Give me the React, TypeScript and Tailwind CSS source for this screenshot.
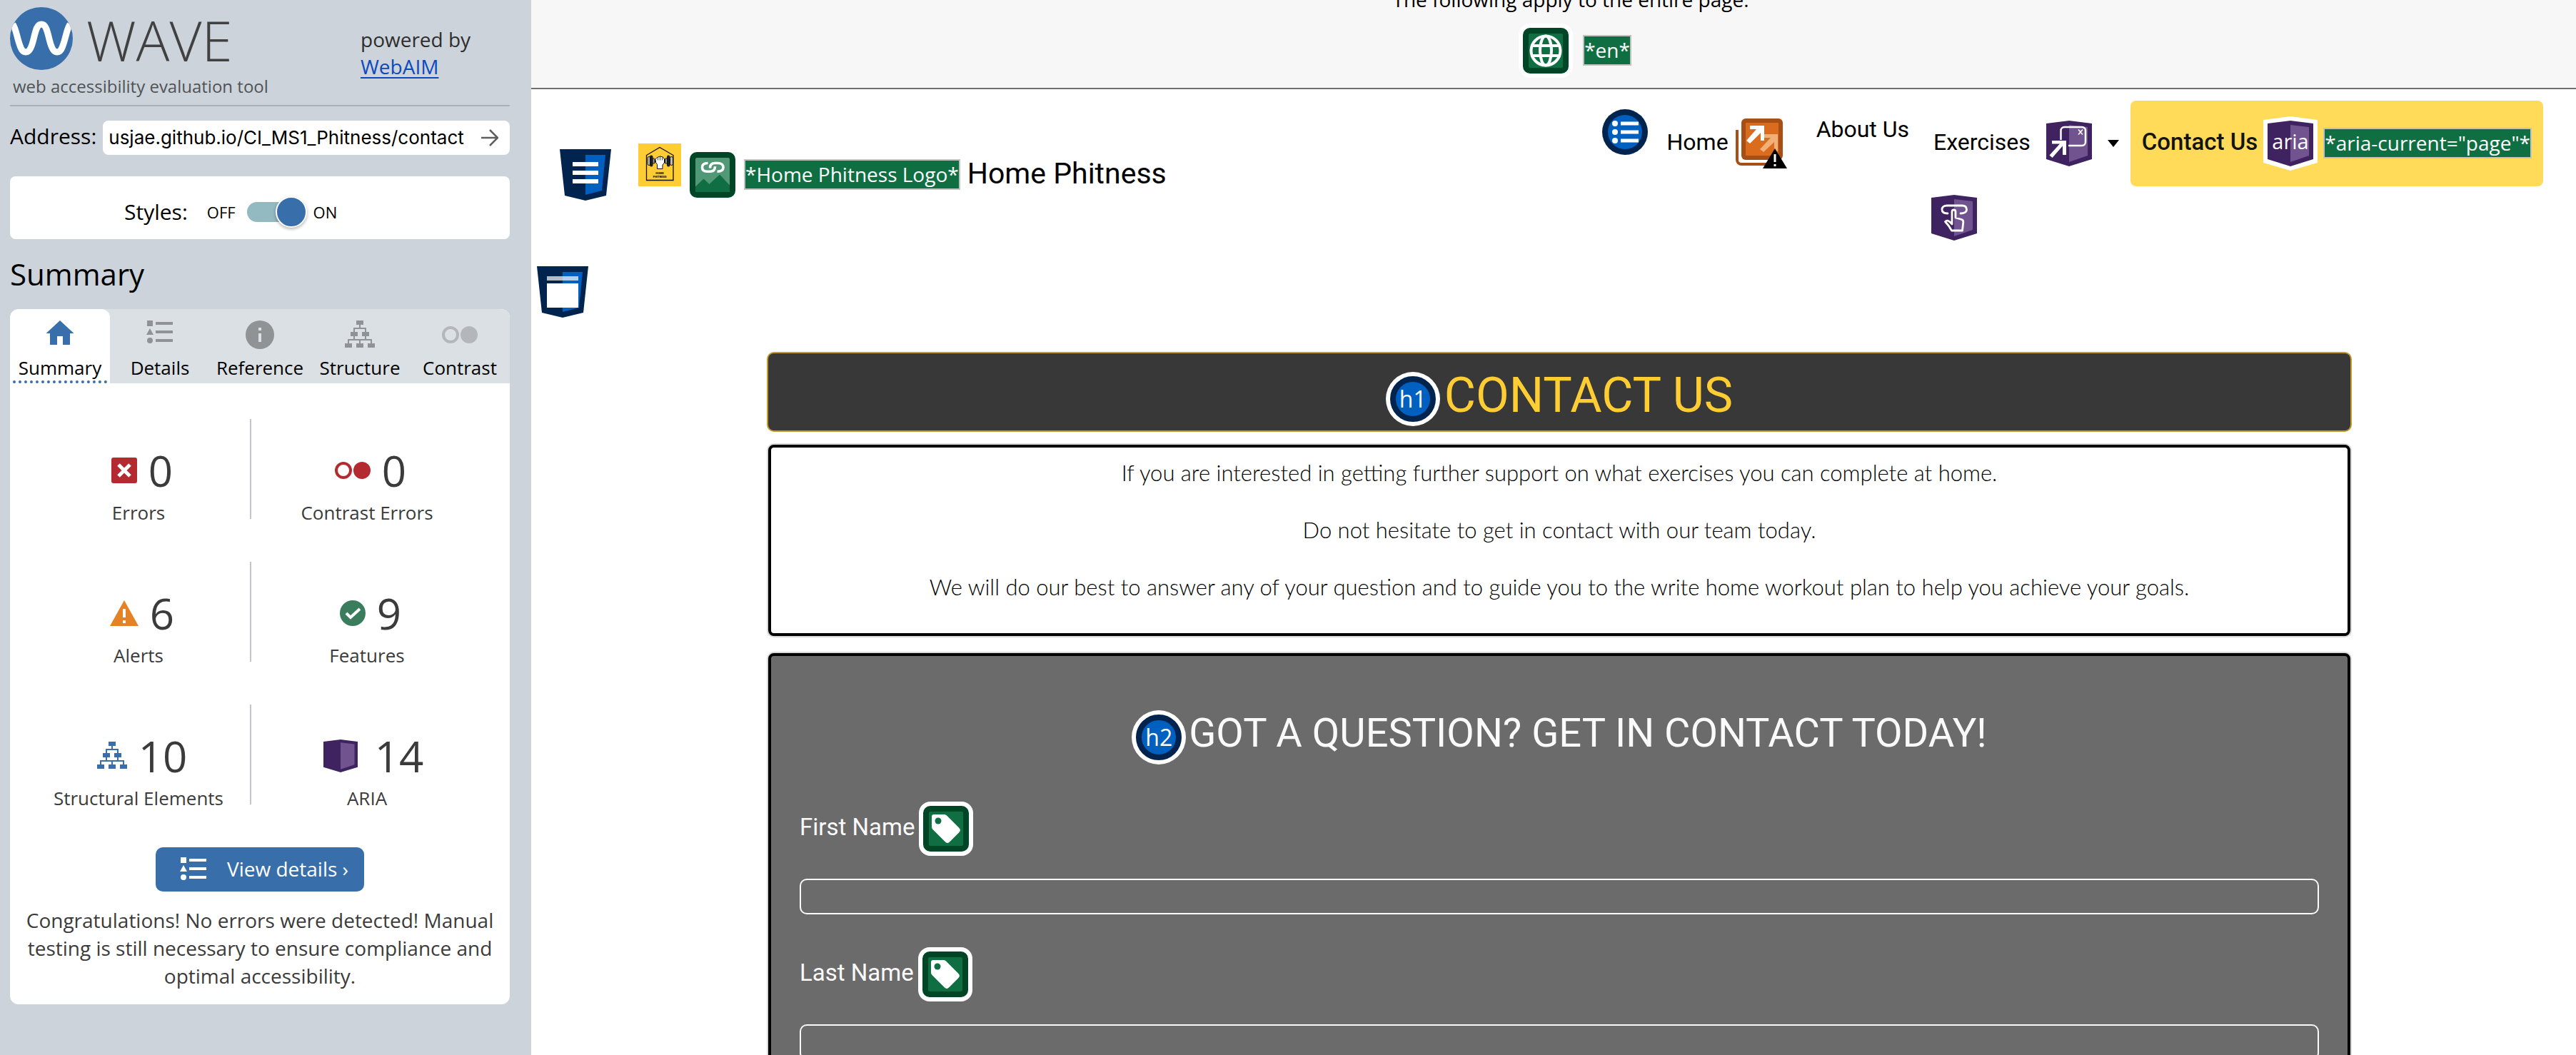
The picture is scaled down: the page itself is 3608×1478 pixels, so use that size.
import type { ReactNode } from 'react';

/* ---------- sidebar glyphs ---------- */

function WaveLogo() {
  return (
    <svg className="h-[88px] w-[88px]" viewBox="0 0 88 88" aria-hidden="true">
      <defs>
        <clipPath id="logo-clip">
          <circle cx="44" cy="44" r="44" />
        </clipPath>
      </defs>
      <circle cx="44" cy="44" r="44" fill="#386fab" />
      <path
        d="M4 24C8 30 9 38 12 48c3 10 5 15 10 15s8-6 11-18c3-13 5-21 11-21s8 8 11 21c3 12 6 18 11 18s7-5 10-15c3-10 4-18 8-24"
        fill="none"
        stroke="#fff"
        strokeWidth="9"
        clipPath="url(#logo-clip)"
      />
    </svg>
  );
}

function HomeIcon() {
  return (
    <svg className="h-10 w-10 text-[#386fab]" viewBox="0 0 40 40" fill="currentColor" aria-hidden="true">
      <path d="M20 0 39.500 18H34v16H24V22h-8v12H6V18H.500z" />
    </svg>
  );
}

function ListIcon({ className }: { className: string }) {
  return (
    <svg className={className} viewBox="0 0 38 40" fill="currentColor" aria-hidden="true">
      <path d="M1 0h8v8H1zM5 11l5 9H0z" />
      <circle cx="5" cy="28" r="4" />
      <path d="M13 2h24v4H13zM13 14h24v4H13zM13 26h24v4H13z" />
    </svg>
  );
}

function InfoIcon() {
  return (
    <svg className="h-10 w-10" viewBox="0 0 40 40" aria-hidden="true">
      <circle cx="20" cy="20" r="20" fill="#8f9396" />
      <path d="M18 10h4v4h-4zM18 18h4v12h-4z" fill="#dbe0e4" />
    </svg>
  );
}

function TreeIcon({ className }: { className: string }) {
  return (
    <svg className={className} viewBox="0 0 42 40" aria-hidden="true">
      <path
        d="M16 0h10v6H16zM8 16h10v6H8zM24 16h10v6H24zM0 32h10v6H0zM16 32h10v6H16zM32 32h10v6H32z"
        fill="currentColor"
      />
      <path
        d="M21 6v5M13 17v-6h16v6M13 22v5M29 22v5M5 33v-6h32v6M21 27v6"
        fill="none"
        stroke="currentColor"
        strokeWidth="2"
      />
    </svg>
  );
}

function ContrastIcon({ className }: { className: string }) {
  return (
    <svg className={className} viewBox="0 0 50 40" aria-hidden="true">
      <circle cx="12" cy="20" r="10" fill="none" stroke="currentColor" strokeWidth="4" />
      <circle cx="38" cy="20" r="12" fill="currentColor" />
    </svg>
  );
}

function ErrorIcon() {
  return (
    <svg className="h-9 w-9" viewBox="0 0 36 36" aria-hidden="true">
      <rect width="36" height="36" rx="3" fill="#b52a31" />
      <path d="M10 10l16 16M26 10 10 26" stroke="#fff" strokeWidth="5" />
    </svg>
  );
}

function AlertIcon() {
  return (
    <svg className="h-9 w-10" viewBox="0 0 40 36" aria-hidden="true">
      <path d="M20 0l20 36H0z" fill="#e58226" />
      <path d="M18 12h4v12h-4zM18 28h4v4h-4z" fill="#fff" />
    </svg>
  );
}

function FeatureIcon() {
  return (
    <svg className="h-9 w-9" viewBox="0 0 36 36" aria-hidden="true">
      <circle cx="18" cy="18" r="18" fill="#397d5c" />
      <path d="M9 18l6 6 13-12" fill="none" stroke="#fff" strokeWidth="4" />
    </svg>
  );
}

function AriaBoxIcon() {
  return (
    <svg className="mx-2 h-[46px] w-12" viewBox="0 0 64 64" preserveAspectRatio="none" aria-hidden="true">
      <path d="M0 4 32 0l32 4v50L32 64 0 54z" fill="#3f2260" />
      <path d="M32 6l26 3v40l-26 9z" fill="#70538f" />
    </svg>
  );
}

/* ---------- page annotation icons ---------- */

function Shield({ label, children }: { label: string; children: ReactNode }) {
  return (
    <svg className="h-[72px] w-[72px] shrink-0" viewBox="0 0 72 72" role="img" aria-label={label}>
      <path d="M0 0h72l-7 65-29 7-29-7z" fill="#00244d" />
      <path d="M36 8h28l-5 50-23 6z" fill="#0060bf" />
      {children}
    </svg>
  );
}

function AriaBadge({ label, children }: { label: string; children: ReactNode }) {
  return (
    <svg className="h-16 w-16 shrink-0" viewBox="0 0 64 64" role="img" aria-label={label}>
      <path d="M0 4 32 0l32 4v50L32 64 0 54z" fill="#3f2260" />
      <path d="M32 6l26 3v40l-26 9z" fill="#70538f" />
      {children}
    </svg>
  );
}

function PopupBadge() {
  return (
    <AriaBadge label="ARIA popup">
      <path
        d="M20.500 27V14a5 5 0 0 1 5-5H50a5 5 0 0 1 5 5v16a5 5 0 0 1-5 5H31"
        fill="none"
        stroke="#fff"
        strokeWidth="2.500"
      />
      <path d="M45 12.500l6 7M51 12.500l-6 7" stroke="#fff" strokeWidth="1.600" />
      <path d="M8 28h20v20h-5V35.500L8.500 52 4.500 48.500 19 32.500H8z" fill="#fff" />
    </AriaBadge>
  );
}

function TouchBadge() {
  return (
    <AriaBadge label="ARIA button">
      <g fill="none" stroke="#fff" strokeWidth="2.800" strokeLinecap="round" strokeLinejoin="round">
        <path d="M23 26c-5 0-8-2-8-5.500S18 15 22 15h21c4 0 6.500 2 6.500 5.500S46 26 41 26" />
        <path d="M29 41V23.500a2.500 2.500 0 0 1 5 0V32l8.500 2.500c2 .700 2.500 2 2.300 4L43.500 50H28.500l-4-6.500-5-6c2-2.200 4.500-1.500 6.500.500z" />
      </g>
    </AriaBadge>
  );
}

function AriaTextBadge() {
  return (
    <svg className="h-[76px] w-[76px] shrink-0" viewBox="0 0 76 76" role="img" aria-label="ARIA">
      <path d="M0 5 38 0l38 5v60L38 76 0 65z" fill="#fff" />
      <path d="M6 10l32-4 32 4v50L38 70 6 60z" fill="#3f2260" />
      <path d="M38 12l26 3v40l-26 9z" fill="#70538f" />
      <text x="38" y="46" textAnchor="middle" fontSize="29" fontWeight="400" fill="#fff" fontFamily="Open Sans, sans-serif">
        aria
      </text>
    </svg>
  );
}

function GreenFrame({ inner, children }: { inner: string; children: ReactNode }) {
  return (
    <>
      <rect width="64" height="64" rx="10" fill="#004525" />
      <rect x="8" y="8" width="48" height="48" rx="2" fill={inner} />
      {children}
    </>
  );
}

function LinkedImageIcon() {
  return (
    <svg className="h-16 w-16 shrink-0" viewBox="0 0 64 64" role="img" aria-label="Linked image with alternative text">
      <GreenFrame inner="#519877">
        <path d="M8 48.500 19.500 37.500l8 7.500L42 31.500l14 15V54a2 2 0 0 1-2 2H10a2 2 0 0 1-2-2z" fill="#0f6f42" />
        <g fill="none" stroke="#fff" strokeWidth="3.600">
          <path d="M25.500 15.500c-5 0-8 1.700-8 6s3.500 5.700 7 5.700h4c4.500 0 7-2 7-7" />
          <path d="M28.500 22.500c0-5 2.500-7 7-7h4c4 0 7.500 1.700 7.500 6s-3.200 5.700-8.500 5.700" />
        </g>
      </GreenFrame>
    </svg>
  );
}

function GlobeIcon() {
  return (
    <span className="rounded-[16px] bg-white p-1.5">
      <svg className="h-16 w-16" viewBox="0 0 64 64" role="img" aria-label="Language">
        <GreenFrame inner="#0f6f42">
          <g fill="none" stroke="#fff" strokeWidth="4">
            <circle cx="32" cy="32" r="20.500" />
            <ellipse cx="32" cy="32" rx="8" ry="20.500" />
            <path d="M13 25h38M13 39h38" />
          </g>
        </GreenFrame>
      </svg>
    </span>
  );
}

function FormLabelIcon() {
  return (
    <span className="rounded-[16px] bg-white p-1.5">
      <svg className="h-16 w-16" viewBox="0 0 64 64" role="img" aria-label="Form label">
        <GreenFrame inner="#0f6f42">
          <path
            d="M15 12h14c2 0 3 .600 4.500 2L50 30.500c2.500 2.500 2.500 4.500 0 7L37.500 50c-2.500 2.500-4.500 2.500-7 0L14 33.500c-1.400-1.500-2-2.500-2-4.500V15c0-2 1-3 3-3z"
            fill="#fff"
          />
          <circle cx="21" cy="21" r="4.500" fill="#0f6f42" />
        </GreenFrame>
      </svg>
    </span>
  );
}

function HeadingBadge({ text }: { text: string }) {
  return (
    <span className="shrink-0 rounded-full bg-white p-1.5">
      <span className="flex h-16 w-16 items-center justify-center rounded-full border-8 border-[#00244d] bg-[#0060bf] font-['Open_Sans',sans-serif] text-[32px] leading-none font-normal text-white">
        {text}
      </span>
    </span>
  );
}

function UnorderedListIcon() {
  return (
    <svg className="h-16 w-16 shrink-0" viewBox="0 0 64 64" role="img" aria-label="Unordered list">
      <circle cx="32" cy="32" r="32" fill="#00244d" />
      <circle cx="32" cy="32" r="24" fill="#0060bf" />
      <g fill="#fff">
        <circle cx="18" cy="20" r="4" />
        <circle cx="18" cy="32" r="4" />
        <circle cx="18" cy="44" r="4" />
        <path d="M26 17.500h25v5H26zM26 29.500h25v5H26zM26 41.500h25v5H26z" />
      </g>
    </svg>
  );
}

function RedundantLinkIcon() {
  return (
    <svg className="h-[70px] w-[72px] shrink-0" viewBox="0 0 72 70" role="img" aria-label="Redundant link">
      <path d="M2 16v42a6 6 0 0 0 6 6h52" fill="none" stroke="#a65017" strokeWidth="4" />
      <rect x="8" y="0" width="58" height="58" rx="6" fill="#a65017" />
      <rect x="14" y="6" width="46" height="46" rx="1" fill="#db6b1d" />
      <path d="M35 22h24v24h-5V33L39 47l-5-4 15-16H35z" fill="#f0b077" />
      <path d="M20 10h20v21h-5V20L20 35l-5-4 14-16h-9z" fill="#fff" />
      <path d="M55 42l17 28H38z" fill="#000" />
      <path d="M53.500 50h3v11h-3zM53.500 64h3v3h-3z" fill="#fff" />
    </svg>
  );
}

function PhitnessLogo() {
  return (
    <svg className="mb-7 ml-[38px] h-[60px] w-[60px] shrink-0" viewBox="0 0 60 60" role="img" aria-label="Home Phitness">
      <rect width="60" height="60" fill="#fecc33" />
      <path d="M11.500 16.500 30 5.500l19 11v35H11.500z" fill="none" stroke="#111" strokeWidth="1.300" />
      <path d="M16 25h28" stroke="#111" strokeWidth="3" />
      <g stroke="#111" strokeWidth="1">
        <rect x="13" y="18.500" width="4" height="12" rx="2" fill="#bbb" />
        <rect x="16.500" y="17" width="3.500" height="15" rx="1.500" fill="#222" />
        <rect x="20" y="21" width="3" height="7" rx="1" fill="#999" />
        <rect x="37.500" y="21" width="3" height="7" rx="1" fill="#999" />
        <rect x="40.500" y="17" width="3.500" height="15" rx="1.500" fill="#222" />
        <rect x="44.500" y="18.500" width="4" height="12" rx="2" fill="#bbb" />
        <path d="M26.500 35.500v-6l-2-3-.500-4.500 2.500-2.500 4-1.500 4 1 2 3v5l-2.500 3v5.500z" fill="#fff" />
        <path d="M27.500 19.500v4M30.500 18.500v5M33.500 19.500v4" strokeWidth=".800" />
      </g>
      <g fill="#111" textAnchor="middle" fontFamily="Roboto, sans-serif" fontWeight="900" fontSize="4">
        <text x="30" y="43">HOME</text>
        <text x="30" y="48">PHITNESS</text>
      </g>
    </svg>
  );
}

function AltTag({ children }: { children: string }) {
  return (
    <span className="mb-0.5 shrink-0 border-2 border-[#bfc4c1] bg-[#0f6f42] font-['Open_Sans',sans-serif] text-[28px] leading-[39px] font-normal whitespace-nowrap text-white">
      {children}
    </span>
  );
}

/* ---------- sidebar ---------- */

const tabs: { name: string; icon: ReactNode }[] = [
  { name: 'Summary', icon: <HomeIcon /> },
  { name: 'Details', icon: <ListIcon className="h-10 w-[38px] text-[#8f9396]" /> },
  { name: 'Reference', icon: <InfoIcon /> },
  { name: 'Structure', icon: <TreeIcon className="h-10 w-[42px] text-[#8f9396]" /> },
  { name: 'Contrast', icon: <ContrastIcon className="h-10 w-[50px] text-[#b3b7bb]" /> },
];

const stats: { label: string; count: number; icon: ReactNode }[] = [
  { label: 'Errors', count: 0, icon: <ErrorIcon /> },
  { label: 'Contrast Errors', count: 0, icon: <ContrastIcon className="h-10 w-[50px] text-[#b52a31]" /> },
  { label: 'Alerts', count: 6, icon: <AlertIcon /> },
  { label: 'Features', count: 9, icon: <FeatureIcon /> },
  { label: 'Structural Elements', count: 10, icon: <TreeIcon className="h-10 w-[42px] text-[#386fab]" /> },
  { label: 'ARIA', count: 14, icon: <AriaBoxIcon /> },
];

function Sidebar() {
  return (
    <aside className="w-[744px] shrink-0 bg-[#ccd3da] pr-[30px] pl-3.5 font-['Open_Sans',sans-serif] text-black">
      <header className="flex justify-between border-b-2 border-[#a9b1b6] pt-2.5 pb-2.5">
        <div>
          <div className="flex items-center gap-[19px]">
            <WaveLogo />
            <span className="pt-1 text-[78px] leading-[80px] font-light text-[#414141]">WAVE</span>
          </div>
          <p className="mt-[7px] pl-1 text-[24px] leading-8 text-[#505356]">web accessibility evaluation tool</p>
        </div>
        <p className="w-[209px] pt-[26px] text-[28px] leading-[38px] text-[#2e2e2e]">
          powered by
          <br />
          <a href="https://webaim.org/" className="text-[#0d4abf] underline decoration-2 underline-offset-4">
            WebAIM
          </a>
        </p>
      </header>

      <form className="mt-5 flex gap-[9px]" onSubmit={(e) => e.preventDefault()}>
        <label htmlFor="address" className="text-[30px] leading-[44px]">
          Address:
        </label>
        <div className="flex h-12 min-w-0 flex-1 items-center rounded-lg bg-white pr-4 pl-2">
          <input
            id="address"
            type="text"
            defaultValue="usjae.github.io/CI_MS1_Phitness/contact"
            className="min-w-0 flex-1 font-[Inter,sans-serif] text-[26px] leading-9 outline-none"
          />
          <button type="submit" aria-label="Analyze this page">
            <svg className="h-6 w-6" viewBox="0 0 24 24" fill="none" stroke="#5f5f5f" strokeWidth="2.500" aria-hidden="true">
              <path d="M0 12h22M12 1l11 11-11 11" />
            </svg>
          </button>
        </div>
      </form>

      <div className="mt-[30px] flex h-[88px] items-center rounded-lg bg-white pt-3 pl-[160px]">
        <label htmlFor="styles" className="text-[30px] leading-9">
          Styles:
        </label>
        <span className="ml-[27px] text-[22px]">OFF</span>
        <input
          id="styles"
          type="checkbox"
          role="switch"
          defaultChecked
          className="relative ml-4 h-7 w-[68px] appearance-none rounded-full bg-[#93b9c1] after:absolute after:top-[-8px] after:left-10 after:h-11 after:w-11 after:rounded-full after:border-2 after:border-white after:bg-[#386fab] after:shadow-[0_2px_4px_rgba(0,0,0,0.3)]"
        />
        <span className="ml-[25px] text-[22px]">ON</span>
      </div>

      <h2 className="my-[21px] text-[42px] leading-[56px]">Summary</h2>

      <div className="overflow-hidden rounded-xl bg-white">
        <div role="tablist" className="grid grid-cols-5 rounded-t-xl bg-[#dbe0e4]">
          {tabs.map((tab, i) => (
            <button
              key={tab.name}
              type="button"
              role="tab"
              aria-selected={i === 0}
              className={
                i === 0
                  ? 'flex flex-col items-center gap-2 rounded-t-xl bg-white pt-4'
                  : 'flex flex-col items-center gap-2 pt-4'
              }
            >
              {tab.icon}
              <span
                className={
                  i === 0
                    ? 'w-[132px] border-b-4 border-dotted border-[#386fab] text-[26px] leading-9'
                    : 'pb-1 text-[26px] leading-9'
                }
              >
                {tab.name}
              </span>
            </button>
          ))}
        </div>

        <div className="text-[#3b3b3b]">
          <ul className="grid grid-cols-[314px_1fr] gap-y-[60px] pt-[50px] pr-[38px] pl-6">
            {stats.map((s, i) => (
              <li
                key={s.label}
                className={
                  i % 2 === 0
                    ? 'flex h-[140px] flex-col items-center border-r-2 border-[#c3c6c8] pt-8'
                    : 'flex h-[140px] flex-col items-center pt-8'
                }
              >
                <span className="flex shrink-0 items-center gap-4 pl-2.5 text-[60px] leading-[80px]">
                  {s.icon}
                  {s.count}
                </span>
                <span className="text-[26px] leading-[38px] whitespace-nowrap">{s.label}</span>
              </li>
            ))}
          </ul>

          <button
            type="button"
            className="mx-auto mt-[60px] flex h-[62px] items-center gap-7 rounded-[10px] bg-[#386fab] pr-[22px] pb-0.5 pl-[34px] text-[28px] text-white"
          >
            <ListIcon className="mt-2 h-10 w-[38px]" />
            View details ›
          </button>

          <p className="mt-[21px] px-4 pb-5 text-center text-[28px] leading-[39px]">
            Congratulations! No errors were detected! Manual testing is still necessary to ensure compliance and optimal
            accessibility.
          </p>
        </div>
      </div>
    </aside>
  );
}

/* ---------- evaluated page ---------- */

function PageBar() {
  return (
    <section className="flex h-[125px] shrink-0 flex-col items-center justify-end gap-3.5 overflow-hidden border-b-2 border-[#6b706b] bg-[#f7f7f7] pb-3.5 pl-12">
      <p className="shrink-0 font-['Open_Sans',sans-serif] text-[28px] leading-10">
        The following apply to the entire page.
      </p>
      <div className="flex shrink-0 items-center gap-3.5 pl-3">
        <GlobeIcon />
        <AltTag>*en*</AltTag>
      </div>
    </section>
  );
}

function SiteHeader() {
  return (
    <header className="flex items-start justify-between pt-4 pr-[46px] pl-10">
      <div className="flex items-center pt-[60px]">
        <Shield label="Navigation">
          <path d="M18 18h36v6H18zM18 30h36v6H18zM18 42h36v6H18z" fill="#fff" />
        </Shield>
        <a href="#home" className="flex items-center gap-3">
          <PhitnessLogo />
          <LinkedImageIcon />
          <AltTag>*Home Phitness Logo*</AltTag>
          <span className="mb-1 -ml-0.5 text-[41px] leading-[56px]">Home Phitness</span>
        </a>
      </div>

      <nav>
        <ul className="flex items-start text-[32px] leading-10 whitespace-nowrap">
          <li className="pt-3">
            <UnorderedListIcon />
          </li>
          <li className="ml-[27px]">
            <a href="#home" className="flex h-[120px] items-center gap-2.5">
              <span className="mb-1">Home</span>
              <RedundantLinkIcon />
            </a>
          </li>
          <li className="ml-[41px] pt-5">
            <a href="#about">About Us</a>
          </li>
          <li className="ml-[31px]">
            <a href="#exercises" role="button" className="flex h-[120px] items-center gap-[22px] pl-[3px]">
              <span className="mb-1">Exercises</span>
              <PopupBadge />
              <svg className="h-2.5 w-4" viewBox="0 0 16 10" aria-hidden="true">
                <path d="M0 0h16L8 10z" />
              </svg>
            </a>
            <div className="mt-3">
              <TouchBadge />
            </div>
          </li>
          <li className="ml-4">
            <a
              href="#contact"
              aria-current="page"
              className="flex h-[120px] items-center gap-2 rounded-lg bg-[#ffdb59] px-4 text-[33px] font-medium text-[#14140a]"
            >
              <span className="mb-1">Contact Us</span>
              <AriaTextBadge />
              <AltTag>{'*aria-current="page"*'}</AltTag>
            </a>
          </li>
        </ul>
      </nav>
    </header>
  );
}

function Field({ id, label }: { id: string; label: string }) {
  return (
    <div>
      <label htmlFor={id} className="flex items-center gap-1.5 text-[33px] leading-10">
        <span className="mb-1">{label}</span>
        <FormLabelIcon />
      </label>
      <input
        id={id}
        type="text"
        className="mt-8 block h-[50px] w-full rounded-[10px] border-2 border-[#fafafa] bg-transparent px-3 text-[28px] outline-none"
      />
    </div>
  );
}

export default function App() {
  return (
    <div className="flex h-screen overflow-hidden bg-white">
      <Sidebar />
      <div className="flex min-w-0 flex-1 flex-col font-[Roboto,sans-serif] text-black">
        <PageBar />
        <SiteHeader />
        <main>
          <div className="mt-9 pl-2">
            <Shield label="Main content">
              <path d="M14 14h44v6H14z" fill="#fff" opacity=".700" />
              <path d="M14 24h44v34H14z" fill="#fff" />
            </Shield>
          </div>

          <div className="mt-[50px] mr-[316px] ml-[332px]">
            <h1 className="flex h-[108px] items-center justify-center gap-1.5 rounded-lg bg-[#383838] pt-5 text-[68px] leading-[80px] text-[#fecc33] ring-2 ring-[#c39a2b]">
              <HeadingBadge text="h1" />
              <span className="mb-2.5">CONTACT US</span>
            </h1>

            <section className="mt-5 flex flex-col gap-10 rounded-lg border-4 border-black bg-white pt-[15px] pb-[45px] text-center font-[Lato,sans-serif] text-[31px] leading-10 font-light ring-2 ring-[#d9d9d9]">
              <p>If you are interested in getting further support on what exercises you can complete at home.</p>
              <p>Do not hesitate to get in contact with our team today.</p>
              <p>
                We will do our best to answer any of your question and to guide you to the write home workout plan to
                help you achieve your goals.
              </p>
            </section>

            <form
              className="mt-6 rounded-lg border-4 border-black bg-[#6b6b6b] px-10 pt-[76px] pb-16 text-[#fafafa] ring-2 ring-[#d9d9d9]"
              onSubmit={(e) => e.preventDefault()}
            >
              <h2 className="flex items-center justify-center gap-1 text-[56px] leading-[60px] font-normal">
                <HeadingBadge text="h2" />
                <span className="mb-3">GOT A QUESTION? GET IN CONTACT TODAY!</span>
              </h2>
              <div className="mt-[52px] flex flex-col gap-[46px]">
                <Field id="first-name" label="First Name" />
                <Field id="last-name" label="Last Name" />
              </div>
            </form>
          </div>
        </main>
      </div>
    </div>
  );
}
